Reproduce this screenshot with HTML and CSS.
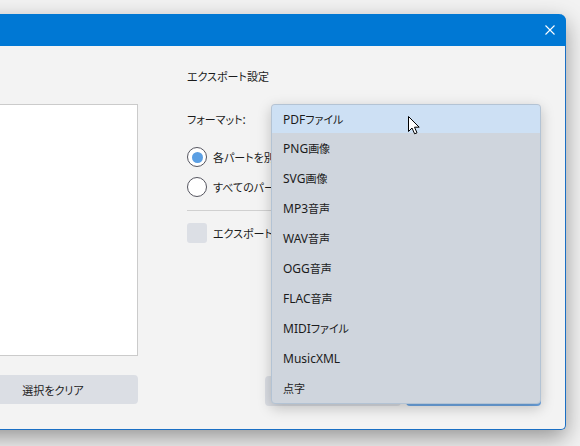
FILE: index.html
```html
<!DOCTYPE html>
<html lang="ja">
<head>
<meta charset="utf-8">
<title>エクスポート</title>
<link rel="stylesheet" href="styles.css">
</head>
<body>
<div class="window">
  <div class="titlebar">
    <div class="close">
      <svg width="10" height="10" viewBox="0 0 10 10"><path d="M0.5 0.5 L9.5 9.5 M9.5 0.5 L0.5 9.5" stroke="#fff" stroke-width="1.1" fill="none"/></svg>
    </div>
  </div>
  <div class="content">
    <div class="left">
      <div class="spacer-head"></div>
      <div class="listbox"></div>
      <button class="btn btn-gray wide">選択をクリア</button>
    </div>
    <div class="right">
      <div class="heading">エクスポート設定</div>
      <div class="format-row">
        <span class="label">フォーマット<span class="lat">:</span></span>
        <div class="combo">
          <ul class="dropdown">
            <li class="item selected"><span class="lat">PDF</span>ファイル</li>
            <li class="item"><span class="lat">PNG</span>画像</li>
            <li class="item"><span class="lat">SVG</span>画像</li>
            <li class="item"><span class="lat">MP3</span>音声</li>
            <li class="item"><span class="lat">WAV</span>音声</li>
            <li class="item"><span class="lat">OGG</span>音声</li>
            <li class="item"><span class="lat">FLAC</span>音声</li>
            <li class="item"><span class="lat">MIDI</span>ファイル</li>
            <li class="item"><span class="lat">MusicXML</span></li>
            <li class="item">点字</li>
          </ul>
        </div>
      </div>
      <div class="radio-row first">
        <span class="radio checked"></span>
        <span class="opt">各パートを別</span>
      </div>
      <div class="radio-row second">
        <span class="radio"></span>
        <span class="opt">すべてのパー</span>
      </div>
      <div class="separator"></div>
      <div class="check-row">
        <span class="checkbox"></span>
        <span class="opt">エクスポート時</span>
      </div>
      <div class="grow"></div>
      <div class="buttons">
        <button class="btn btn-gray cancel"></button>
        <button class="btn btn-blue ok"></button>
      </div>
    </div>
  </div>
</div>
<svg class="cursor" width="13" height="19" viewBox="0 0 13 19">
  <path d="M0.5 0.5 L0.5 15.5 L4 12 L6.6 17.8 L9 16.8 L6.5 11.2 L11.2 11.2 Z" fill="#fff" stroke="#000" stroke-width="1" stroke-linejoin="miter"/>
</svg>
</body>
</html>
```

FILE: styles.css
```css
* { box-sizing: border-box; }
html, body { margin: 0; padding: 0; }
body {
  width: 580px;
  height: 446px;
  overflow: hidden;
  background: #f2f2f2;
  font-family: "Noto Sans", "Noto Sans CJK JP", sans-serif;
  font-size: 11px;
  color: #1b1b1b;
  font-feature-settings: "palt";
  padding-top: 14px;
  position: relative;
}
.lat { font-size: 12px; }
.window {
  margin-left: -60px;
  width: 626px;
  height: 416px;
  background: #f3f3f3;
  border-right: 1px solid #1a6fc4;
  border-bottom: 1px solid #1a6fc4;
  border-radius: 0 7px 5px 0;
  box-shadow: 0 8px 22px rgba(0,0,0,0.38);
  display: flex;
  flex-direction: column;
}
.titlebar {
  height: 32px;
  background: #0078d4;
  border-radius: 0 7px 0 0;
  margin-right: -1px;
  display: flex;
  justify-content: flex-end;
  align-items: center;
}
.close {
  width: 32px;
  height: 32px;
  display: flex;
  align-items: center;
  justify-content: center;
}
.close svg { display: block; }
.content {
  flex: 1;
  display: grid;
  grid-template-columns: 170px 354px;
  column-gap: 49px;
  padding: 22px 24px 23px 28px;
}
.left {
  display: flex;
  flex-direction: column;
}
.spacer-head { height: 36px; }
.listbox {
  height: 252px;
  background: #fff;
  border: 1px solid #cbcbcb;
}
.btn {
  font: inherit;
  border: none;
  border-radius: 4px;
  height: 30px;
  padding: 0;
  color: #1b1b1b;
}
.btn-gray { background: #dbdee4; }
.btn-blue { background: #0078d4; color: #fff; }
.wide { margin-top: 19px; width: 100%; height: 29px; }
.right {
  display: flex;
  flex-direction: column;
}
.heading {
  height: 18px;
  line-height: 18px;
}
.format-row {
  margin-top: 18px;
  height: 30px;
  display: flex;
  align-items: center;
}
.label { width: 84px; }
.combo {
  position: relative;
  width: 270px;
  height: 30px;
  background: #dbdee4;
  border-radius: 4px;
}
.dropdown {
  position: absolute;
  left: 0;
  top: 0;
  width: 270px;
  height: 300px;
  margin: 0;
  padding: 0;
  list-style: none;
  background: #cfd5dd;
  border: 1px solid #b3c3d4;
  border-radius: 4px;
  box-shadow: 0 4px 14px rgba(0,0,0,0.22);
  overflow: hidden;
  z-index: 5;
}
.item {
  height: 30px;
  line-height: 32px;
  padding-left: 11px;
  white-space: nowrap;
}
.item.selected { height: 28px; line-height: 30px; background: #cde0f4; }
.radio-row, .check-row {
  display: flex;
  align-items: center;
  height: 20px;
  white-space: nowrap;
}
.opt { white-space: nowrap; }
.radio-row.first { margin-top: 13px; }
.radio-row.second { margin-top: 10px; }
.radio {
  width: 20px;
  height: 20px;
  border-radius: 50%;
  border: 1px solid #55555f;
  background: #fff;
  margin-right: 6px;
  display: flex;
  align-items: center;
  justify-content: center;
  flex: none;
}
.radio.checked::after {
  content: "";
  width: 11px;
  height: 11px;
  border-radius: 50%;
  background: #5b9fe3;
}
.separator {
  margin-top: 13px;
  height: 1px;
  background: #d0d0d0;
}
.check-row { margin-top: 12px; }
.checkbox {
  width: 20px;
  height: 20px;
  border-radius: 3px;
  background: #dcdfe5;
  margin-right: 6px;
  flex: none;
}
.grow { flex: 1; }
.buttons {
  display: flex;
  justify-content: flex-end;
  gap: 5px;
}
.cancel { width: 136px; }
.ok { width: 135px; background: #6fa8e6; }
.cursor {
  position: absolute;
  left: 408px;
  top: 116px;
  z-index: 10;
}
```
